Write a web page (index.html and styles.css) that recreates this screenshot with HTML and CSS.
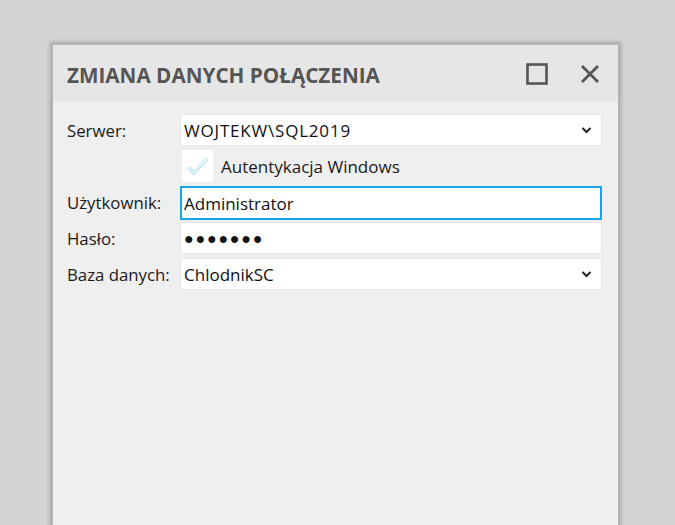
FILE: index.html
```html
<!DOCTYPE html>
<html lang="pl">
<head>
    <meta charset="UTF-8">
    <title>Zmiana danych połączenia</title>
    <link rel="stylesheet" href="styles.css">
</head>
<body>
<div class="dialog">
    <div class="dialog__header">
        <span class="dialog__title">ZMIANA DANYCH POŁĄCZENIA</span>
        <span class="dialog__btn">
            <svg width="22" height="22" viewBox="0 0 22 22"><rect x="1.5" y="1.5" width="19" height="19" fill="none" stroke="#555" stroke-width="2.6"/></svg>
        </span>
        <span class="dialog__btn dialog__btn--close">
            <svg width="20" height="20" viewBox="0 0 20 20"><path d="M2 2L18 18M18 2L2 18" stroke="#555" stroke-width="2.8" fill="none"/></svg>
        </span>
    </div>
    <div class="dialog__body">
        <div class="form-row">
            <label class="form-row__label">Serwer:</label>
            <div class="field field--combo">
                <span class="field__text field__text--caps">WOJTEKW\SQL2019</span>
                <svg class="field__arrow" width="11" height="8" viewBox="0 0 11 8"><path d="M1.5 2L5.5 6L9.5 2" stroke="#222" stroke-width="2" fill="none"/></svg>
            </div>
        </div>
        <div class="form-row">
            <span class="form-row__label"></span>
            <div class="check">
                <span class="check__box">
                    <svg width="22" height="20" viewBox="0 0 22 20"><path d="M1.5 11.5L7 17L20.5 2.5" stroke="#a6dcf2" stroke-width="3.2" fill="none"/><path d="M1.5 11.5L7 17L20.5 2.5" stroke="#fff" stroke-width="1.2" fill="none"/></svg>
                </span>
                <span class="check__label">Autentykacja Windows</span>
            </div>
        </div>
        <div class="form-row">
            <label class="form-row__label">Użytkownik:</label>
            <div class="field is-focused">
                <span class="field__text">Administrator</span>
            </div>
        </div>
        <div class="form-row">
            <label class="form-row__label">Hasło:</label>
            <div class="field">
                <span class="field__text field__text--password">●●●●●●●</span>
            </div>
        </div>
        <div class="form-row">
            <label class="form-row__label">Baza danych:</label>
            <div class="field field--combo">
                <span class="field__text">ChlodnikSC</span>
                <svg class="field__arrow" width="11" height="8" viewBox="0 0 11 8"><path d="M1.5 2L5.5 6L9.5 2" stroke="#222" stroke-width="2" fill="none"/></svg>
            </div>
        </div>
    </div>
</div>
</body>
</html>
```

FILE: styles.css
```css
body {
    margin: 0;
    padding: 45px 0 0 53px;
    background: #d4d4d4;
    font-family: "Open Sans", "Noto Sans", sans-serif;
    height: 525px;
    box-sizing: border-box;
    overflow: hidden;
}
.dialog {
    width: 565px;
    height: 480px;
    background: #efefef;
    box-shadow: 0 0 0 1px #b4b4b4, 0 0 4px 3px rgba(0, 0, 0, .22);
}
.dialog__header {
    display: flex;
    align-items: center;
    height: 57px;
    padding: 0 17px 0 14px;
    background: #e6e6e6;
}
.dialog__title {
    flex: 1;
    font-size: 20.7px;
    font-weight: 700;
    color: #555;
    margin-top: 2px;
}
.dialog__btn {
    display: flex;
    align-items: center;
    justify-content: center;
    width: 22px;
    height: 22px;
    margin-left: 34px;
}
.dialog__btn--close {
    margin-left: 31px;
}
.dialog__body {
    display: flex;
    flex-direction: column;
    gap: 4px;
    padding: 12px 16px 0 14px;
}
.form-row {
    display: flex;
    align-items: center;
    height: 32px;
}
.form-row__label {
    width: 113px;
    flex: none;
    font-size: 16.8px;
    color: #1a1a1a;
}
.field {
    flex: 1;
    display: flex;
    align-items: center;
    height: 32px;
    box-sizing: border-box;
    padding: 0 9px 0 3px;
    background: #fff;
    border: 1px solid #e6e6e6;
}
.field.is-focused {
    border: 2px solid #1ba3e6;
    padding-left: 2px;
    height: 34px;
    margin-top: 2px;
}
.field__text {
    flex: 1;
    font-size: 17px;
    color: #111;
}
.field__text--caps {
    letter-spacing: 0.8px;
}
.field__text--password {
    font-size: 16px;
    letter-spacing: 1.8px;
}
.check {
    display: flex;
    align-items: center;
    height: 32px;
}
.check__box {
    display: flex;
    align-items: center;
    justify-content: center;
    width: 31px;
    height: 32px;
    margin-left: 2px;
    background: #fff;
}
.check__label {
    margin-left: 8px;
    font-size: 17px;
    color: #1a1a1a;
}
```
